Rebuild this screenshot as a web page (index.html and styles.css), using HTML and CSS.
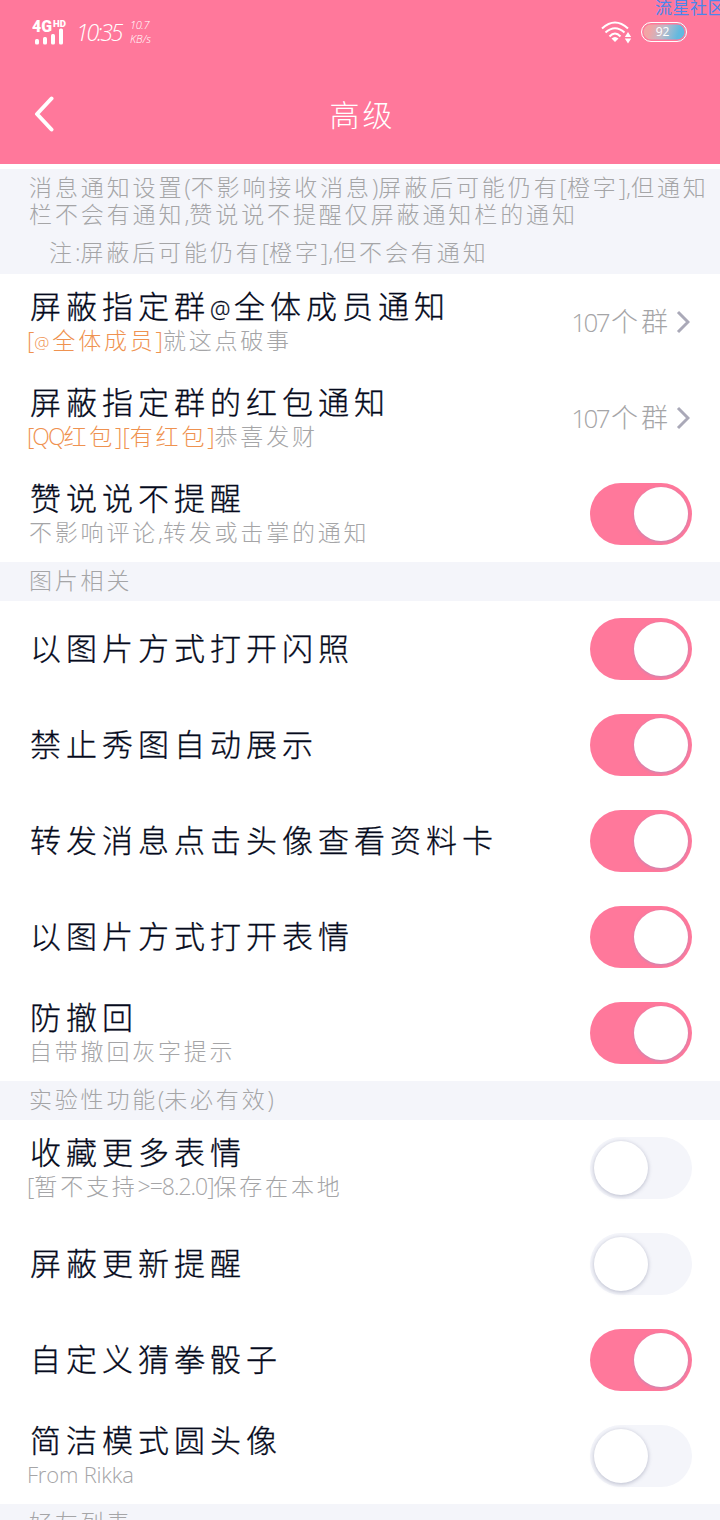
FILE: index.html
```html
<!DOCTYPE html>
<html lang="zh-CN">
<head>
<meta charset="utf-8">
<title>高级</title>
<link rel="stylesheet" href="styles.css">
</head>
<body>
<div class="screen">
  <header class="header">
    <div class="status">
      <svg class="signal" width="38" height="30" viewBox="0 0 38 30">
        <g fill="#fff"><text class="net" x="0" y="15" textLength="20" lengthAdjust="spacingAndGlyphs">4G</text><text class="hd" x="21" y="10" textLength="13" lengthAdjust="spacingAndGlyphs">HD</text>
        <rect x="3" y="22" width="4" height="5.500" rx="1.500"/><rect x="11" y="20" width="4" height="7.500" rx="1.500"/><rect x="19" y="17" width="4" height="10.500" rx="1.500"/><rect x="27" y="11.500" width="4" height="16" rx="1.500"/></g>
      </svg>
      <span class="time">10:35</span>
      <span class="speed"><span>10.7</span><span>KB/s</span></span>
      <svg class="wifi" width="32" height="24" viewBox="0 0 32 24" fill="none" stroke="#fff" stroke-width="2">
        <path d="M2 8.500Q15-3.500 28 8.500M5.500 12.500Q15 4 24.500 12.500M9.500 16.500Q15 10.500 20.500 16.500"/>
        <path d="M11.500 18.500Q15 15.500 18.500 18.500L15 22Z" fill="#fff" stroke="none"/>
        <path d="M24.800 17L28 12 31.200 17ZM24.800 18.500L28 23.500 31.200 18.500Z" fill="#fff" stroke="none"/>
      </svg>
      <span class="battery">92</span>
    </div>
    <span class="watermark">流星社区</span>
    <nav class="nav">
      <svg class="back" width="20" height="36" viewBox="0 0 20 36" fill="none" stroke="#fff" stroke-width="4" stroke-linecap="round" stroke-linejoin="round"><path d="M17.500 2.500L3 18L17.500 33.500"/></svg>
      <h1>高级</h1>
    </nav>
  </header>

  <section class="intro">
    <p>消息通知设置<i>(</i>不影响接收消息<i>)</i>屏蔽后可能仍有<i>[</i>橙字<i>],</i>但通知<br>栏不会有通知<i>,</i>赞说说不提醒仅屏蔽通知栏的通知</p>
    <p class="note">注<i>:</i>屏蔽后可能仍有<i>[</i>橙字<i>],</i>但不会有通知</p>
  </section>

  <div class="row"><div class="label"><h2>屏蔽指定群<i class="at">@</i>全体成员通知</h2><p><em><i>[</i><i class="at">@</i>全体成员<i>]</i></em>就这点破事</p></div>
    <span class="count"><i>107</i>个群</span><svg class="chev" width="14" height="24" viewBox="0 0 14 24"><path d="M2 2L12 12L2 22"/></svg></div>
  <div class="row"><div class="label"><h2>屏蔽指定群的红包通知</h2><p><em><i class="qq">[QQ</i>红包<i>][</i>有红包<i>]</i></em>恭喜发财</p></div>
    <span class="count"><i>107</i>个群</span><svg class="chev" width="14" height="24" viewBox="0 0 14 24"><path d="M2 2L12 12L2 22"/></svg></div>
  <div class="row"><div class="label"><h2>赞说说不提醒</h2><p>不影响评论<i>,</i>转发或击掌的通知</p></div><span class="switch on"></span></div>

  <div class="section">图片相关</div>
  <div class="row"><div class="label"><h2>以图片方式打开闪照</h2></div><span class="switch on"></span></div>
  <div class="row"><div class="label"><h2>禁止秀图自动展示</h2></div><span class="switch on"></span></div>
  <div class="row"><div class="label"><h2>转发消息点击头像查看资料卡</h2></div><span class="switch on"></span></div>
  <div class="row"><div class="label"><h2>以图片方式打开表情</h2></div><span class="switch on"></span></div>
  <div class="row"><div class="label"><h2>防撤回</h2><p>自带撤回灰字提示</p></div><span class="switch on"></span></div>

  <div class="section">实验性功能<i>(</i>未必有效<i>)</i></div>
  <div class="row"><div class="label"><h2>收藏更多表情</h2><p class="bracket"><i>[</i>暂不支持<i class="ver">&gt;=8.2.0]</i>保存在本地</p></div><span class="switch"></span></div>
  <div class="row"><div class="label"><h2>屏蔽更新提醒</h2></div><span class="switch"></span></div>
  <div class="row"><div class="label"><h2>自定义猜拳骰子</h2></div><span class="switch on"></span></div>
  <div class="row"><div class="label"><h2>简洁模式圆头像</h2><p class="bracket"><i class="from">From Rikka</i></p></div><span class="switch"></span></div>
  <div class="section">好友列表</div>
</div>
</body>
</html>
```

FILE: styles.css
```css
* { box-sizing: border-box; margin: 0; padding: 0; }
html, body { height: 1520px; overflow: hidden; }
body { background: #fff; color: #050a1c; font-family: "Noto Sans CJK SC", sans-serif; font-weight: 300; }
h1, h2 { font-weight: 300; }
i, em { font-style: normal; }
i { font-family: "Open Sans", "Noto Sans", sans-serif; font-weight: 300; letter-spacing: 0; line-height: 1; }
.screen { width: 720px; height: 1520px; overflow: hidden; display: flex; flex-direction: column; }
.screen > * { flex-shrink: 0; }

.header { position: relative; height: 164px; background: #ff789b; color: #fff; }
.status { height: 64px; padding: 0 33px 0 32px; display: flex; align-items: center; }
.net { font: 900 16px Roboto, sans-serif; }
.hd { font: 900 9px Roboto, sans-serif; }
.time { margin-left: 6px; width: 47px; font: italic 300 23px/30px "Open Sans", sans-serif; letter-spacing: -2.1px; white-space: nowrap; }
.speed { margin-left: 7px; display: flex; flex-direction: column; font: italic 300 11px/14px "Open Sans", sans-serif; }
.speed span:first-child { letter-spacing: -0.4px; }
.wifi { margin-left: auto; }
.battery { margin: -1px 0 0 9px; width: 46px; height: 20px; border: 1.5px solid #fff; border-radius: 10px; box-shadow: inset 0 0 0 1.5px #ff789b; background: linear-gradient(110deg, #f2a4a5 20%, #b8bccb 50%, #62b9df 80%); font: 400 12px/17px "Open Sans", sans-serif; text-align: center; padding-right: 3px; }
.watermark { position: absolute; left: 655px; top: -3px; font-size: 17px; line-height: 20px; letter-spacing: 0.5px; color: #4b86ec; font-weight: 400; white-space: nowrap; }
.nav { height: 100px; display: flex; align-items: center; padding-left: 34px; }
.nav h1 { flex: 1; margin: -3px 49px 0 0; text-align: center; font-size: 30px; letter-spacing: 3px; line-height: 40px; }

.intro { margin-top: 5px; height: 105px; padding: 4px 0 0 29px; background: #f4f5fa; color: #a5a5a7; font-size: 23px; line-height: 27px; letter-spacing: 2.9px; white-space: nowrap; }
.note { padding-left: 20px; margin-top: 11px; }
.section { height: 39px; padding-left: 29px; background: #f4f5fa; color: #a5a5a7; font-size: 23px; line-height: 35px; letter-spacing: 2.8px; white-space: nowrap; }

.row { height: 96px; padding: 0 28px 0 30px; display: flex; align-items: center; white-space: nowrap; }
.label { flex: 1; margin-top: -4px; }
.label h2 { height: 38px; font-size: 31px; line-height: 38px; letter-spacing: 5px; -webkit-text-stroke: 0.3px #050a1c; }
.label p { height: 30px; margin-left: -1px; font-size: 23px; line-height: 30px; letter-spacing: 2.8px; color: #a5a5a7; }
.label em { color: #ef9250; margin-left: -2px; }
.label .bracket { margin-left: -3px; }
h2 .at { display: inline-block; width: 24px; font-size: 23px; }
p .at { display: inline-block; width: 18px; font-size: 17px; }
.qq { letter-spacing: -2px; }
.ver { letter-spacing: -1px; }
.from { font-size: 22px; letter-spacing: -0.2px; }
.count { color: #a5a5a7; font-size: 27px; letter-spacing: 3px; margin: -4px 5px 0 0; }
.count i { font-size: 26px; letter-spacing: -2.6px; margin-right: 3px; }
.chev { fill: none; stroke: #aaa9b8; stroke-width: 3; margin-right: 2px; }

.switch { width: 102px; height: 62px; padding: 4px; border-radius: 31px; background: #f4f5fa; display: flex; }
.switch::after { content: ""; width: 54px; height: 54px; border-radius: 50%; background: #fff; box-shadow: 0 1px 4px rgba(90, 95, 130, 0.4); }
.switch.on { background: #ff789b; justify-content: flex-end; }
.switch.on::after { box-shadow: 0 1px 3px rgba(150, 150, 200, 0.6); }
```
